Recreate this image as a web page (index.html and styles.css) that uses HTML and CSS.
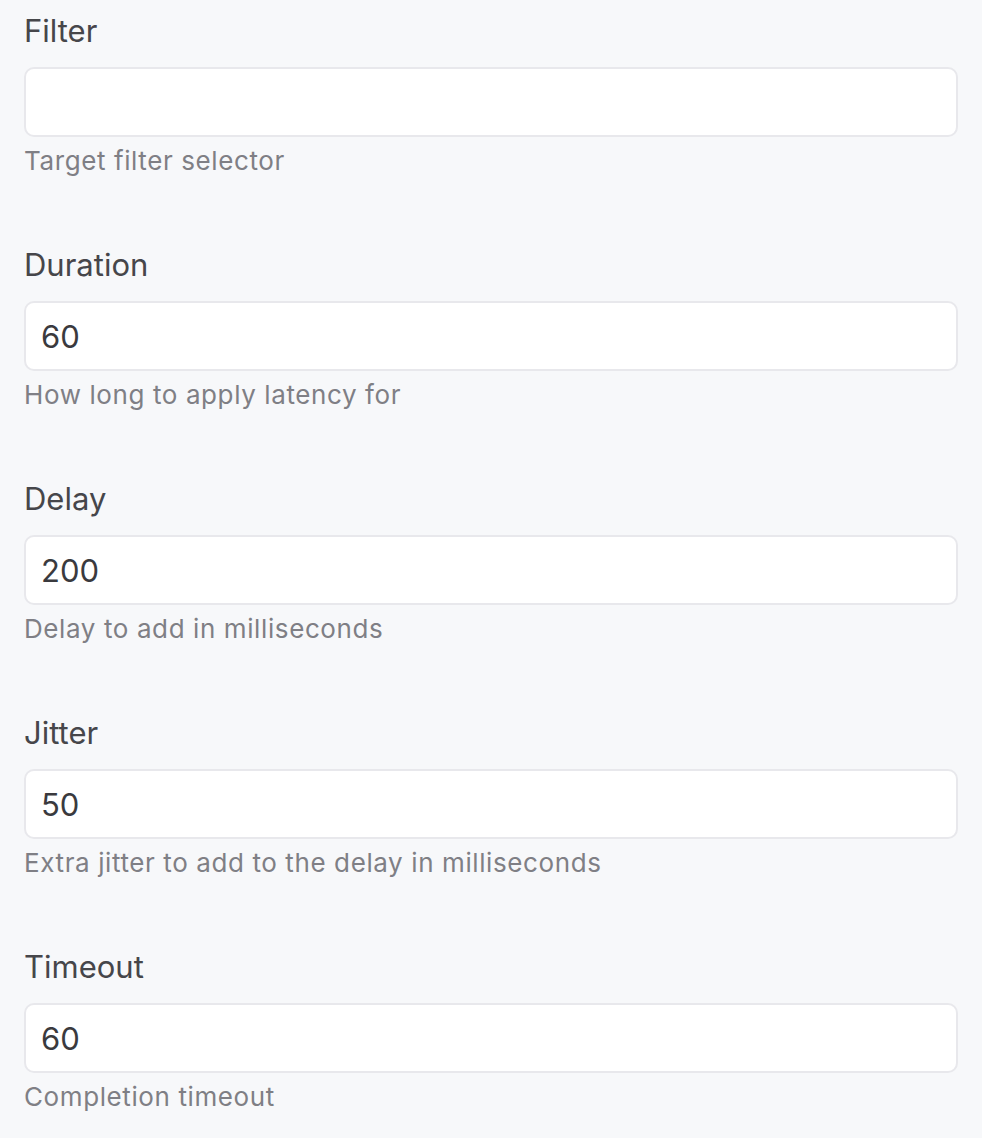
FILE: index.html
```html
<!DOCTYPE html>
<html>
<head>
<meta charset="utf-8">
<link rel="stylesheet" href="styles.css">
</head>
<body>
<form class="form">
  <div class="field">
    <label class="label">Filter</label>
    <input class="input" type="text" value="">
    <div class="help">Target filter selector</div>
  </div>
  <div class="field">
    <label class="label">Duration</label>
    <input class="input" type="text" value="60">
    <div class="help">How long to apply latency for</div>
  </div>
  <div class="field">
    <label class="label">Delay</label>
    <input class="input" type="text" value="200">
    <div class="help">Delay to add in milliseconds</div>
  </div>
  <div class="field">
    <label class="label">Jitter</label>
    <input class="input" type="text" value="50">
    <div class="help">Extra jitter to add to the delay in milliseconds</div>
  </div>
  <div class="field">
    <label class="label">Timeout</label>
    <input class="input" type="text" value="60">
    <div class="help">Completion timeout</div>
  </div>
</form>
</body>
</html>
```
FILE: styles.css
```css
html, body {
  margin: 0;
  padding: 0;
  background: #f7f8fa;
}
body {
  font-family: Inter, "Noto Sans", "Liberation Sans", sans-serif;
}
.form {
  display: flex;
  flex-direction: column;
  gap: 65px;
  padding: 10px 24px 0 24px;
}
.field {
  display: flex;
  flex-direction: column;
}
.label {
  font-size: 31px;
  line-height: 42px;
  color: #46464a;
  margin-bottom: 15px;
}
.input {
  box-sizing: border-box;
  height: 70px;
  width: 100%;
  border: 2px solid #e8e8ec;
  border-radius: 10px;
  background: #ffffff;
  padding: 0 15px;
  font-family: inherit;
  font-size: 31px;
  color: #3a3a3e;
  outline: none;
}
.help {
  margin-top: 6px;
  font-size: 26px;
  letter-spacing: 0.6px;
  line-height: 36px;
  color: #7f7f85;
}
```
